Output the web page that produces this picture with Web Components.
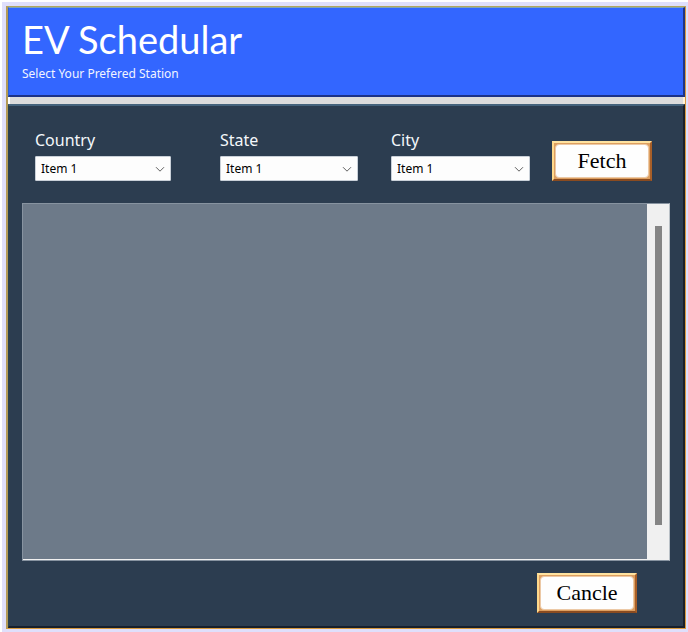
<!DOCTYPE html>
<html lang="en">
<head>
<meta charset="utf-8">
<title>EV Schedular</title>
<style>
html, body { margin: 0; }
body { background: #fff; font-family: "Noto Sans", "DejaVu Sans", sans-serif; }
</style>
</head>
<body>
<ev-window>
  <ev-header slot="header">
    <span slot="title">EV Schedular</span>
    <span slot="subtitle">Select Your Prefered Station</span>
  </ev-header>
  <ev-filters>
    <ev-select label="Country"></ev-select>
    <ev-select label="State"></ev-select>
    <ev-select label="City"></ev-select>
    <ev-button>Fetch</ev-button>
  </ev-filters>
  <ev-list></ev-list>
  <ev-actions><ev-button>Cancle</ev-button></ev-actions>
</ev-window>
<script>
class EvElement extends HTMLElement {
  constructor() {
    super();
    const root = this.attachShadow({ mode: 'open' });
    root.innerHTML = '<style>*{box-sizing:border-box}:host{box-sizing:border-box}' + this.constructor.css + '</style>' + this.constructor.html;
  }
}

class EvWindow extends EvElement {
  static css = `
    :host { display: flex; min-height: 100vh; padding: 2px 0 0 2px; }
    .back { flex: 1; display: flex; background: #dfdffb; padding: 4px 2px 3px 4px; }
    .frame { flex: 1; display: flex; flex-direction: column; border: 1px solid #d99a3e; border-top-color: #b3a75c; border-left: 2px solid #b39a58; background: #2c3d50; }
    .split { flex: none; height: 7px; background: #dcdcdc; border-left: 2px solid #fff; border-right: 2px solid #fff3d8; }
    main { flex: 1; display: flex; flex-direction: column; padding: 24px 13px 13px; border: 1px solid #17202c; border-top: 2px solid #45637c; border-left-color: #2a4250; border-right: 2px solid #1a2028; border-bottom-width: 2px; }`;
  static html = `<div class="back"><div class="frame"><slot name="header"></slot><div class="split"></div><main><slot></slot></main></div></div>`;
}

class EvHeader extends EvElement {
  static css = `
    :host { display: block; flex: none; height: 90px; padding: 8px 13px; color: #fff; background: #3366ff; border: 1px solid #2f62cf; border-top-color: #7fa5b8; border-right: 2px solid #203483; border-bottom: 2px solid #1c3287; }
    h1 { margin: 0; font: 400 38px/46px Lato, sans-serif; }
    p { margin: 2px 0 0; font-size: 12px; line-height: 20px; color: #f1f4ff; }`;
  static html = `<h1><slot name="title"></slot></h1><p><slot name="subtitle"></slot></p>`;
}

class EvFilters extends EvElement {
  static css = `
    :host { display: flex; flex: none; padding: 0 18px 22px 13px; }
    .row { flex: 1; display: grid; grid-template-columns: 136fr 49fr 138fr 33fr 139fr 22fr 100fr; }
    ::slotted(:nth-child(1)) { grid-column: 1; grid-row: 1; }
    ::slotted(:nth-child(2)) { grid-column: 3; grid-row: 1; }
    ::slotted(:nth-child(3)) { grid-column: 5; grid-row: 1; }
    ::slotted(:nth-child(4)) { grid-column: 7; grid-row: 1; align-self: end; }`;
  static html = `<div class="row"><slot></slot></div>`;
}

class EvSelect extends EvElement {
  static css = `
    :host { display: block; min-width: 0; }
    label { display: block; color: #f4f8fb; font-size: 16px; line-height: 20px; margin-bottom: 6px; }
    .box { display: grid; align-items: center; }
    select { grid-area: 1 / 1; width: 100%; height: 25px; appearance: none; border: 1px solid #c9d0d8; border-radius: 1px; background: #fdfdfd; color: #000; font-family: inherit; font-size: 12px; padding: 0 20px 0 5px; }
    svg { grid-area: 1 / 1; justify-self: end; margin-right: 6px; pointer-events: none; }`;
  static html = `<label for="s"></label><div class="box"><select id="s"><option>Item 1</option></select>
    <svg width="10" height="8" viewBox="0 0 10 8" fill="none" stroke="#606060" stroke-width="1"><path d="M1 2.2 5 6.2 9 2.2"/></svg></div>`;
  connectedCallback() { this.shadowRoot.querySelector('label').textContent = this.getAttribute('label'); }
}

class EvButton extends EvElement {
  static css = `
    :host { display: block; width: 100px; }
    button { display: block; width: 100%; height: 40px; padding: 0; border: 2px solid; border-color: #ffe3a0 #a85f28 #8a4b20 #ffd98c; background: #dd9f61; }
    span { display: block; margin: 1px; height: 34px; border: 1px solid #ecc9a6; border-radius: 4px; background: #fefefe; color: #000; font: 22px/32px "Liberation Serif", serif; }`;
  static html = `<button type="button"><span><slot></slot></span></button>`;
}

class EvList extends EvElement {
  static css = `
    :host { display: flex; flex: 1; min-height: 80px; border: 1px solid #8793a0; border-right-color: #b9c0c6; }
    .view { flex: 1; background: #6d7a89; border-bottom: 1px solid #f0f0f0; }
    .bar { width: 22px; display: flex; justify-content: center; padding: 22px 0 35px; background: #f0f0f0; }
    .thumb { width: 7px; background: #858585; }`;
  static html = `<div class="view"></div><div class="bar"><div class="thumb"></div></div>`;
}

class EvActions extends EvElement {
  static css = `:host { display: flex; flex: none; justify-content: flex-end; padding: 12px 33px 0 0; }`;
  static html = `<slot></slot>`;
}

customElements.define('ev-window', EvWindow);
customElements.define('ev-header', EvHeader);
customElements.define('ev-filters', EvFilters);
customElements.define('ev-select', EvSelect);
customElements.define('ev-button', EvButton);
customElements.define('ev-list', EvList);
customElements.define('ev-actions', EvActions);
</script>
</body>
</html>
